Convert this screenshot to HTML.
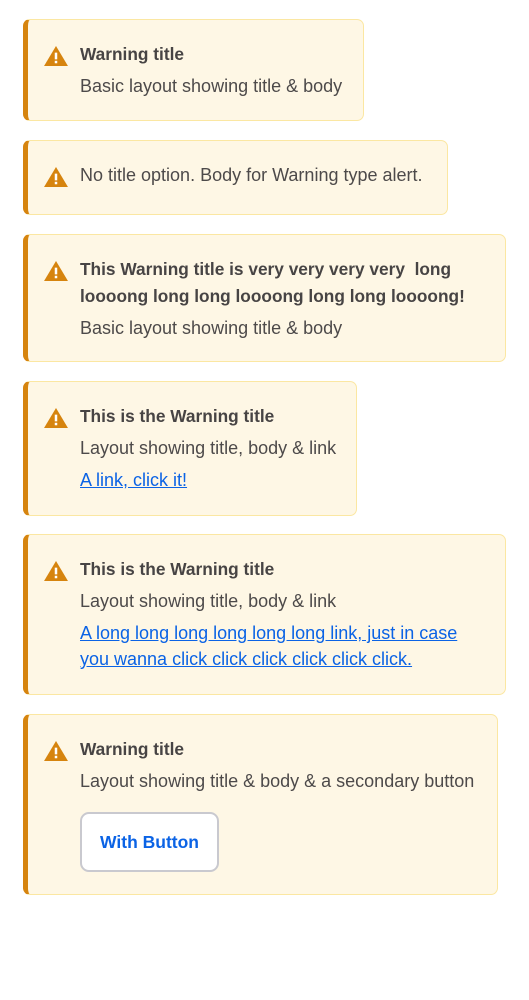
<!DOCTYPE html>
<html><head><style>
body{margin:0;width:529px;height:1000px;background:#fff;font-family:"Liberation Sans",sans-serif;color:#4d4a4a;position:relative}
.a{position:absolute;left:23px;background:#fef7e5;border:1px solid #fbe7a2;border-left:5px solid #d6840e;border-radius:7px;box-sizing:border-box}
.i{position:absolute;left:15px;width:26px;height:22px}
.t,.b,.l{position:absolute;left:52px;font-size:18px;white-space:nowrap}
.t{font-weight:bold;color:#474444;font-size:17.3px}
.l{color:#0b63e5;text-decoration:underline}
.btn{position:absolute;left:52px;width:139px;height:60px;border:2px solid #c9c9cf;border-radius:9px;background:#fff;box-sizing:border-box;color:#0b63e5;font-weight:bold;font-size:17.5px;display:flex;align-items:center;justify-content:center}
</style></head><body>
<svg width="0" height="0" style="position:absolute"><defs><g id="w"><path d="M13 1 L25.5 22 L0.5 22 Z" fill="#d6840e"/><rect x="11.7" y="8" width="2.6" height="7" fill="#fff"/><rect x="11.7" y="16.5" width="2.6" height="2.6" fill="#fff"/></g></defs></svg>

<div class="a" style="top:19px;width:341px;height:102px">
<svg class="i" style="top:25px" viewBox="0 0 26 23"><use href="#w"/></svg>
<div class="t" style="top:24px">Warning title</div>
<div class="b" style="top:56px">Basic layout showing title &amp; body</div></div>

<div class="a" style="top:140px;width:425px;height:75px">
<svg class="i" style="top:25px" viewBox="0 0 26 23"><use href="#w"/></svg>
<div class="b" style="top:24px">No title option. Body for Warning type alert.</div></div>

<div class="a" style="top:234px;width:483px;height:128px">
<svg class="i" style="top:25px" viewBox="0 0 26 23"><use href="#w"/></svg>
<div class="t" style="top:24px">This Warning title is very very very very&nbsp; long</div>
<div class="t" style="top:51px">loooong long long loooong long long loooong!</div>
<div class="b" style="top:83px">Basic layout showing title &amp; body</div></div>

<div class="a" style="top:381px;width:334px;height:135px">
<svg class="i" style="top:25px" viewBox="0 0 26 23"><use href="#w"/></svg>
<div class="t" style="top:24px">This is the Warning title</div>
<div class="b" style="top:56px">Layout showing title, body &amp; link</div>
<div class="l" style="top:88px">A link, click it!</div></div>

<div class="a" style="top:534px;width:483px;height:161px">
<svg class="i" style="top:25px" viewBox="0 0 26 23"><use href="#w"/></svg>
<div class="t" style="top:24px">This is the Warning title</div>
<div class="b" style="top:56px">Layout showing title, body &amp; link</div>
<div class="l" style="top:88px">A long long long long long long link, just in case</div>
<div class="l" style="top:114px">you wanna click click click click click click.</div></div>

<div class="a" style="top:714px;width:475px;height:181px">
<svg class="i" style="top:25px" viewBox="0 0 26 23"><use href="#w"/></svg>
<div class="t" style="top:24px">Warning title</div>
<div class="b" style="top:56px">Layout showing title &amp; body &amp; a secondary button</div>
<div class="btn" style="top:97px">With Button</div></div>
</body></html>
